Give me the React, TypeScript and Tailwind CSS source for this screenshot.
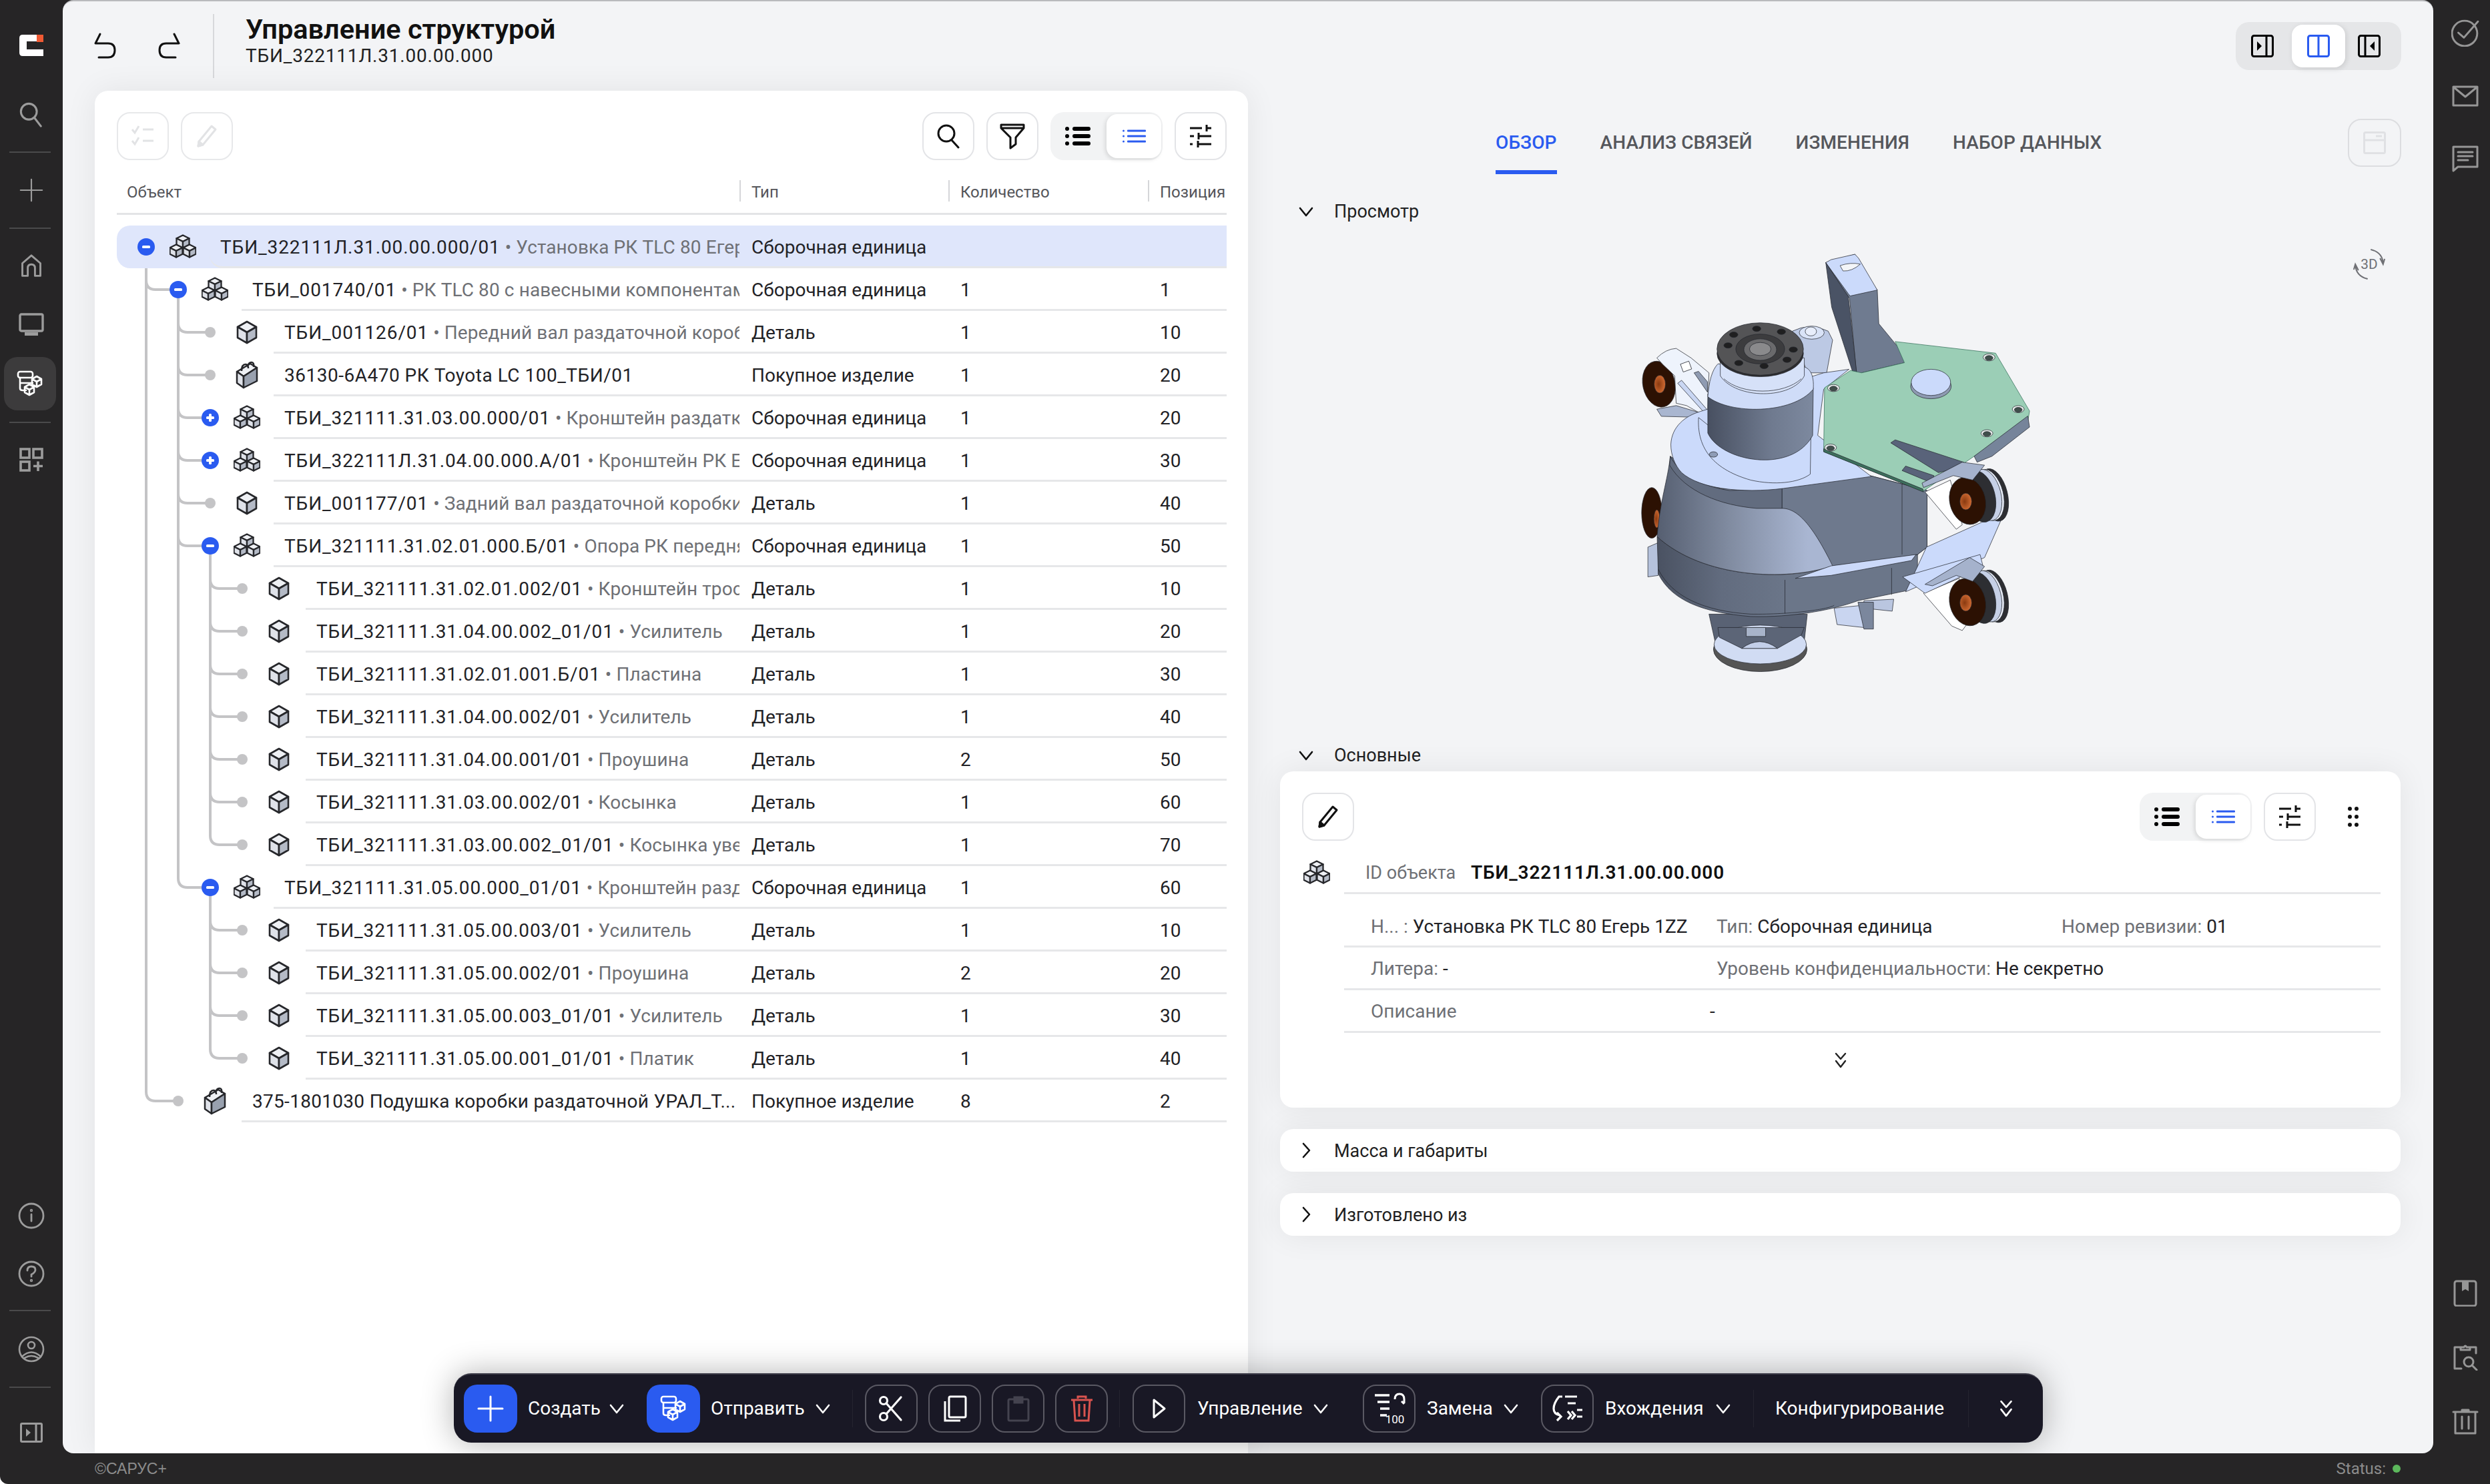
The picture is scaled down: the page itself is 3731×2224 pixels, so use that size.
import React from "react";

const BLUE = "#2a5bf0";

const Svg = ({ s = 40, children, className, fill = "none", c = "currentColor", w = 3, vb = 40 }: any) => (
  <svg width={s} height={s} viewBox={`0 0 ${vb} ${vb}`} fill={fill} stroke={c} strokeWidth={w} strokeLinecap="round" strokeLinejoin="round" className={className}>
    {children}
  </svg>
);

const Cube = () => (
  <svg width="34" height="38" viewBox="0 0 34 38" strokeLinejoin="round">
    <path d="M17 3 L31 11 L17 19 L3 11 Z" fill="#eef0f4" stroke="#26272b" strokeWidth="2.6" />
    <path d="M3 11 L17 19 V35 L3 27 Z" fill="#dfe2e9" stroke="#26272b" strokeWidth="2.6" />
    <path d="M31 11 L17 19 V35 L31 27 Z" fill="#b4bac6" stroke="#26272b" strokeWidth="2.6" />
  </svg>
);

const MiniCube = ({ x, y, r = 11 }: { x: number; y: number; r?: number }) => (
  <g transform={`translate(${x} ${y})`} stroke="#26272b" strokeWidth="2.3" strokeLinejoin="round">
    <path d={`M0 ${-r} L${r} ${-r / 2} L0 0 L${-r} ${-r / 2} Z`} fill="#eef0f4" />
    <path d={`M${-r} ${-r / 2} L0 0 V${r} L${-r} ${r / 2} Z`} fill="#dfe2e9" />
    <path d={`M${r} ${-r / 2} L0 0 V${r} L${r} ${r / 2} Z`} fill="#b4bac6" />
  </g>
);

const Assembly = ({ s = 40 }: { s?: number }) => (
  <svg width={s} height={s} viewBox="0 0 40 40">
    <MiniCube x={20} y={12} r={9.5} />
    <MiniCube x={10} y={26} r={9.5} />
    <MiniCube x={30} y={26} r={9.5} />
  </svg>
);

const Bought = () => (
  <svg width="34" height="42" viewBox="0 0 34 42" strokeLinejoin="round" stroke="#26272b" strokeWidth="2.5">
    <path d="M2 16 L22 4 L32 10 L12 23 Z" fill="#eef0f4" />
    <path d="M2 16 L12 23 V40 L2 33 Z" fill="#dfe2e9" />
    <path d="M32 10 L12 23 V40 L32 30 Z" fill="#99a1af" />
    <path d="M9 15 Q9 5 15 5 Q19 5 19 11 M18 9 Q19 2 24 2 Q28 2 27 9" fill="none" />
  </svg>
);

const Structure = ({ c = "#fff", s = 40 }: { c?: string; s?: number }) => (
  <svg width={s} height={s} viewBox="0 0 40 40" fill="none" stroke={c} strokeWidth="2.6" strokeLinejoin="round" strokeLinecap="round">
    <rect x="2" y="2" width="22" height="9" rx="3" />
    <path d="M5 11 V27 Q5 30 9 30 H14 M5 19 H24" />
    <path d="M30 9 L37 13 V21 L30 25 L23 21 V13 Z M23 13 L30 17 L37 13 M30 17 V25" />
    <path d="M19 21 L26 25 V33 L19 37 L12 33 V25 Z M12 25 L19 29 L26 25 M19 29 V37" />
  </svg>
);

const Chev = ({ s = 24, c = "currentColor", dir = "down", w = 2.6 }: { s?: number; c?: string; dir?: string; w?: number }) => (
  <svg width={s} height={s} viewBox="0 0 24 24" fill="none" stroke={c} strokeWidth={w} strokeLinecap="round" strokeLinejoin="round">
    {dir === "down" ? <path d="M3 7 L12 18 L21 7" /> : <path d="M8 2 L17 12 L8 22" />}
  </svg>
);

const DblChev = ({ c = "currentColor", s = 24, w = 2.4 }: { c?: string; s?: number; w?: number }) => (
  <svg width={s} height={s} viewBox="0 0 24 24" fill="none" stroke={c} strokeWidth={w} strokeLinecap="round" strokeLinejoin="round">
    <path d="M5 2 L12 10 L19 2 M5 13 L12 22 L19 13" />
  </svg>
);

const ListBold = () => (
  <svg width="38" height="30" viewBox="0 0 38 30" fill="#000">
    <circle cx="3" cy="4" r="3" /><circle cx="3" cy="15" r="3" /><circle cx="3" cy="26" r="3" />
    <rect x="11" y="1" width="27" height="6" rx="3" /><rect x="11" y="12" width="27" height="6" rx="3" /><rect x="11" y="23" width="27" height="6" rx="3" />
  </svg>
);
const ListThin = () => (
  <svg width="35" height="20" viewBox="0 0 35 20" fill={BLUE}>
    <circle cx="1.5" cy="2" r="1.5" /><circle cx="1.5" cy="10" r="1.5" /><circle cx="1.5" cy="18" r="1.5" />
    <rect x="7" y="0.5" width="28" height="3" rx="1" /><rect x="7" y="8.5" width="28" height="3" rx="1" /><rect x="7" y="16.5" width="28" height="3" rx="1" />
  </svg>
);
const Tune = () => (
  <svg width="34" height="34" viewBox="0 0 34 34" fill="none" stroke="#111" strokeWidth="3">
    <path d="M1 5 H19 M27 5 H33 M26 0 V10 M1 17 H7 M15 17 H33 M14 12 V22 M1 29 H5 M13 29 H33 M13 24 V34" />
  </svg>
);
const Pencil = ({ c = "#111", w = 3 }: { c?: string; w?: number }) => (
  <svg width="32" height="36" viewBox="0 0 32 36" fill="none" stroke={c} strokeWidth={w} strokeLinejoin="round">
    <path d="M23 3 L29 8 L10 31 L3 33 L4 26 Z" />
    <path d="M4 26 L10 31 L3 33 Z" fill={c} />
  </svg>
);

const IconBtn = ({ children, disabled }: { children: React.ReactNode; disabled?: boolean }) => (
  <div className={`w-[78px] h-[72px] shrink-0 rounded-[20px] border-[2px] flex items-center justify-center ${disabled ? "border-[#e7e8ea]" : "border-[#e3e4e7] bg-white"}`}>
    {children}
  </div>
);

const ListGroup = () => (
  <div className="w-[168px] h-[72px] shrink-0 rounded-[20px] bg-[#f2f3f4] flex items-center p-[3px] pr-[2px]">
    <div className="w-[81px] flex justify-center pr-[5px]"><ListBold /></div>
    <div className="w-[82px] h-[66px] rounded-[16px] bg-white shadow-[-2px_2px_6px_rgba(0,0,0,0.12)] flex items-center justify-center"><ListThin /></div>
  </div>
);

type Row = { l: number; kind: "asm" | "part" | "buy" | "buyw"; exp?: "-" | "+"; name: string; desc?: string; type: string; qty: string; pos: string };
const A = "Сборочная единица", D = "Деталь", P = "Покупное изделие";
const rows: Row[] = [
  { l: 0, kind: "asm", exp: "-", name: "ТБИ_322111Л.31.00.00.000/01", desc: "Установка РК TLC 80 Егер", type: A, qty: "", pos: "" },
  { l: 1, kind: "asm", exp: "-", name: "ТБИ_001740/01", desc: "РК TLC 80 с навесными компонентам", type: A, qty: "1", pos: "1" },
  { l: 2, kind: "part", name: "ТБИ_001126/01", desc: "Передний вал раздаточной короб", type: D, qty: "1", pos: "10" },
  { l: 2, kind: "buy", name: "36130-6A470 РК Toyota LC 100_ТБИ/01", type: P, qty: "1", pos: "20" },
  { l: 2, kind: "asm", exp: "+", name: "ТБИ_321111.31.03.00.000/01", desc: "Кронштейн раздатк", type: A, qty: "1", pos: "20" },
  { l: 2, kind: "asm", exp: "+", name: "ТБИ_322111Л.31.04.00.000.А/01", desc: "Кронштейн РК Е", type: A, qty: "1", pos: "30" },
  { l: 2, kind: "part", name: "ТБИ_001177/01", desc: "Задний вал раздаточной коробки", type: D, qty: "1", pos: "40" },
  { l: 2, kind: "asm", exp: "-", name: "ТБИ_321111.31.02.01.000.Б/01", desc: "Опора РК передня", type: A, qty: "1", pos: "50" },
  { l: 3, kind: "part", name: "ТБИ_321111.31.02.01.002/01", desc: "Кронштейн трос", type: D, qty: "1", pos: "10" },
  { l: 3, kind: "part", name: "ТБИ_321111.31.04.00.002_01/01", desc: "Усилитель", type: D, qty: "1", pos: "20" },
  { l: 3, kind: "part", name: "ТБИ_321111.31.02.01.001.Б/01", desc: "Пластина", type: D, qty: "1", pos: "30" },
  { l: 3, kind: "part", name: "ТБИ_321111.31.04.00.002/01", desc: "Усилитель", type: D, qty: "1", pos: "40" },
  { l: 3, kind: "part", name: "ТБИ_321111.31.04.00.001/01", desc: "Проушина", type: D, qty: "2", pos: "50" },
  { l: 3, kind: "part", name: "ТБИ_321111.31.03.00.002/01", desc: "Косынка", type: D, qty: "1", pos: "60" },
  { l: 3, kind: "part", name: "ТБИ_321111.31.03.00.002_01/01", desc: "Косынка уве", type: D, qty: "1", pos: "70" },
  { l: 2, kind: "asm", exp: "-", name: "ТБИ_321111.31.05.00.000_01/01", desc: "Кронштейн разд", type: A, qty: "1", pos: "60" },
  { l: 3, kind: "part", name: "ТБИ_321111.31.05.00.003/01", desc: "Усилитель", type: D, qty: "1", pos: "10" },
  { l: 3, kind: "part", name: "ТБИ_321111.31.05.00.002/01", desc: "Проушина", type: D, qty: "2", pos: "20" },
  { l: 3, kind: "part", name: "ТБИ_321111.31.05.00.003_01/01", desc: "Усилитель", type: D, qty: "1", pos: "30" },
  { l: 3, kind: "part", name: "ТБИ_321111.31.05.00.001_01/01", desc: "Платик", type: D, qty: "1", pos: "40" },
  { l: 1, kind: "buyw", name: "375-1801030 Подушка коробки раздаточной УРАЛ_Т...", type: P, qty: "8", pos: "2" },
];

const GUT = ["w-[139px] pl-[31px]", "w-[187px] pl-[79px]", "w-[235px] pl-[127px]", "w-[283px] pl-[175px]"];
const NAME = ["w-[794px]", "w-[746px]", "w-[698px]", "w-[650px]"];

const y = (i: number) => 32 + 64 * i;
const br = (xv: number, i: number, xe: number) => `M${xv} ${y(i) - 14} Q${xv} ${y(i)} ${xv + 14} ${y(i)} H${xe}`;
const treePath = [
  `M44 32 V${y(20) - 14}`, br(44, 1, 92), br(44, 20, 93),
  `M92 ${y(1)} V${y(15) - 14}`, ...[2, 3, 4, 5, 6, 7, 15].map((i) => br(92, i, 140)),
  `M140 ${y(7)} V${y(14) - 14}`, ...[8, 9, 10, 11, 12, 13, 14].map((i) => br(140, i, 189)),
  `M140 ${y(15)} V${y(19) - 14}`, ...[16, 17, 18, 19].map((i) => br(140, i, 189)),
].join(" ");

const Expander = ({ t }: { t: "-" | "+" }) => (
  <div className="w-[26px] h-[26px] rounded-full bg-[#2a5bf0] flex items-center justify-center">
    <svg width="14" height="14" viewBox="0 0 14 14" fill="#fff">
      <rect x="1" y="5" width="12" height="4" rx="1.5" />
      {t === "+" && <rect x="5" y="1" width="4" height="12" rx="1.5" />}
    </svg>
  </div>
);

const TreeRow = ({ r, first }: { r: Row; first: boolean }) => (
  <div className={`relative flex h-[64px] text-[28px] text-[#222226] ${first ? "bg-[#dfe6fb] rounded-l-[20px]" : ""}`}>
    <div className={`${GUT[r.l]} shrink-0 flex items-center`}>
      <div className="w-[26px] flex justify-center shrink-0">
        {r.exp ? <Expander t={r.exp} /> : <div className="w-[16px] h-[16px] rounded-full bg-[#c4c4c6]" />}
      </div>
      <div className="ml-[22px] w-[40px] shrink-0 flex justify-center">
        {r.kind === "asm" ? <Assembly /> : r.kind === "part" ? <Cube /> : <Bought />}
      </div>
    </div>
    <div className={`flex-1 flex items-center pt-[4px] border-b-[3px] border-[#e6e7e9] ${first ? "rounded-bl-[20px]" : ""}`}>
      <div className={`${NAME[r.l]} pl-[16px] overflow-hidden whitespace-nowrap`}>
        <span className={r.kind === "buy" ? "tracking-[0.5px]" : r.kind === "buyw" ? "tracking-[0.3px]" : "tracking-[0.9px]"}>{r.name}</span>
        {r.desc && <span className="text-[#6e7075] tracking-[0.1px]"> • {r.desc}</span>}
      </div>
      <div className="w-[313px] pl-[18px] whitespace-nowrap">{r.type}</div>
      <div className="w-[299px] pl-[18px]">{r.qty}</div>
      <div className="w-[118px] pl-[18px]">{r.pos}</div>
    </div>
  </div>
);

const HeadCell = ({ w, children }: { w: string; children: React.ReactNode }) => (
  <div className={`${w} h-[32px] border-l-[2px] border-[#d5d6d9] pl-[16px] flex items-center pt-[3px]`}>{children}</div>
);

const SectionHead = ({ label, open }: { label: string; open?: boolean }) => (
  <div className="flex items-center gap-[30px] h-[44px] ml-[75px] text-[27px] text-[#1f1f22]">
    <Chev s={24} c="#111" dir={open ? "down" : "right"} />
    <span className={open ? "" : "pt-[2px]"}>{label}</span>
  </div>
);

const Mount = ({ cx, cy }: { cx: number; cy: number }) => (
  <g>
    <ellipse cx={cx + 46} cy={cy} rx="46" ry="90" transform={`rotate(-14 ${cx + 46} ${cy})`} fill="#2d2e32" />
    <ellipse cx={cx + 30} cy={cy} rx="48" ry="88" transform={`rotate(-14 ${cx + 30} ${cy})`} fill="#e8edf8" />
    <ellipse cx={cx + 22} cy={cy} rx="48" ry="88" transform={`rotate(-14 ${cx + 22} ${cy})`} fill="#c6d0e6" />
    <ellipse cx={cx} cy={cy + 5} rx="50" ry="88" transform={`rotate(-14 ${cx} ${cy + 5})`} fill="#2d2e32" />
    <ellipse cx={cx - 42} cy={cy + 20} rx="60" ry="80" transform={`rotate(-14 ${cx - 42} ${cy + 20})`} fill="#2c1103" />
    <ellipse cx={cx - 48} cy={cy + 22} rx="20" ry="28" fill="url(#cop)" />
  </g>
);

const Model = () => (
  <svg width="700" height="700" viewBox="0 0 1568 1568" strokeLinejoin="round">
    <defs>
      <linearGradient id="body" gradientUnits="userSpaceOnUse" x1="188" x2="780" y1="0" y2="0">
        <stop offset="0" stopColor="#565f71" />
        <stop offset="0.4" stopColor="#808ba0" />
        <stop offset="0.85" stopColor="#a9b6d2" />
        <stop offset="1" stopColor="#a9b6d2" />
      </linearGradient>
      <linearGradient id="band" gradientUnits="userSpaceOnUse" x1="188" x2="620" y1="0" y2="0">
        <stop offset="0" stopColor="#4a5262" />
        <stop offset="0.5" stopColor="#626c7f" />
        <stop offset="1" stopColor="#6b7689" />
      </linearGradient>
      <linearGradient id="cyl" x1="0" x2="1" y1="0" y2="0">
        <stop offset="0" stopColor="#485061" />
        <stop offset="0.6" stopColor="#6f7a8f" />
        <stop offset="1" stopColor="#7d899f" />
      </linearGradient>
      <radialGradient id="cop" cx="0.4" cy="0.5" r="0.7">
        <stop offset="0" stopColor="#8a3a10" />
        <stop offset="1" stopColor="#e0753a" />
      </radialGradient>
    </defs>
    <g stroke="#22252c" strokeWidth="1.6">
      {/* left rear mounts */}
      <ellipse cx="192" cy="528" rx="54" ry="78" transform="rotate(-12 192 528)" fill="#2c1103" />
      <ellipse cx="195" cy="528" rx="19" ry="30" fill="url(#cop)" />
      <path d="M185 440 Q215 410 250 408 L300 440 L360 490 L355 640 L285 600 L250 592 L245 500 L205 462 Z" fill="#eef3fc" />
      <path d="M185 612 L250 600 L350 630 L350 640 L200 636 Z" fill="#a9b6d0" />
      <path d="M255 525 L268 515 L355 615 L350 630 Z" fill="#c9d6f2" />
      <path d="M310 490 L325 485 L355 520 L355 555 Z" fill="#8f9bb2" />
      <rect x="268" y="455" width="30" height="28" fill="#fff" transform="rotate(-20 283 469)" />
      <ellipse cx="168" cy="960" rx="34" ry="85" fill="#2c1103" />
      <ellipse cx="185" cy="980" rx="10" ry="30" fill="url(#cop)" />
      <path d="M155 1075 L190 1060 V1170 L155 1175 Z" fill="#b5c2dc" />
      {/* rear cylinder */}
      <path d="M640 350 Q700 320 760 350 L775 380 L755 490 L690 490 Z" fill="#bcc9e4" />
      <ellipse cx="705" cy="355" rx="42" ry="22" fill="#d9e3f7" />
      <ellipse cx="702" cy="351" rx="19" ry="15" fill="#e8eefb" />
      {/* bottom flange */}
      <path d="M360 1300 L690 1300 L680 1390 L380 1390 Z" fill="#596274" />
      <ellipse cx="532" cy="1418" rx="157" ry="75" fill="#555" />
      <ellipse cx="532" cy="1402" rx="155" ry="65" fill="#d1dcf3" />
      <path d="M395 1378 L470 1415 L590 1415 L670 1370 L680 1345 L390 1345 Z" fill="#5c6577" />
      <path d="M470 1415 Q530 1370 590 1415 Z" fill="#c3cfe9" />
      <rect x="485" y="1345" width="65" height="30" fill="#a8b4ca" />
      {/* rear pin */}
      <path d="M780 1280 L880 1270 L880 1345 L790 1335 Z" fill="#c9d5f0" />
      <path d="M880 1255 L980 1250 L975 1290 L880 1280 Z" fill="#bac6e0" />
      <path d="M860 1260 H912 V1350 H880 Z" fill="#7b879d" />
      {/* lower band */}
      <path d="M186 1040 L190 1165 C235 1255 340 1295 500 1308 C640 1312 780 1285 860 1255 L1020 1222 L1060 1190 L1060 1100 L770 1140 C620 1190 340 1180 186 1040 Z" fill="url(#band)" />
      <path d="M190 1150 C235 1240 340 1290 500 1300 C640 1302 770 1282 780 1270" fill="none" />
      <path d="M615 1185 V1298 M973 1145 V1235" fill="none" />
      {/* main body */}
      <path d="M230 770 C222 850 195 920 186 1040 C340 1180 620 1190 775 1138 L1060 1100 L1092 1075 V885 L900 835 L400 880 Z" fill="url(#body)" />
      <path d="M605 878 V945 C650 945 700 985 775 1138 L1060 1100 L1092 1075 V885 L900 835 Z" fill="#6e798d" />
      <path d="M230 770 C260 830 330 870 430 885 L605 878 V945 L520 945 C400 935 280 890 228 800 Z" fill="#626c7f" />
      <path d="M1008 855 V1100" fill="none" />
      {/* bright strip */}
      <path d="M650 1180 L770 1138 L1055 1100 L1040 1120 L770 1170 Z" fill="#cbd9f9" />
      {/* top light plate */}
      <path d="M232 730 C235 670 280 635 330 620 L520 560 L745 490 L830 478 L745 545 L725 700 L905 838 L610 878 C470 895 330 880 268 825 C245 800 232 765 232 730 Z" fill="#cbdafb" />
      <path d="M325 640 C320 730 360 810 500 850 C580 868 660 860 700 830 L702 700 L400 700 Z" fill="#cbdafb" />
      <ellipse cx="375" cy="764" rx="14" ry="9" fill="#8f9cb6" />
      {/* main cylinder */}
      <path d="M356 560 V692 C400 790 640 830 708 700 L710 540 Z" fill="url(#cyl)" />
      <path d="M356 570 C360 520 370 480 390 460 L680 470 C710 480 712 520 710 545 C640 630 430 630 356 570 Z" fill="#cfdcf8" />
      <path d="M398 500 C450 580 640 580 680 500 L680 440 H398 Z" fill="#d6e1f8" />
      <path d="M410 510 C470 565 610 565 670 510" fill="none" />
      {/* top flange */}
      <ellipse cx="532" cy="425" rx="145" ry="78" fill="#2d2d2f" />
      <ellipse cx="532" cy="410" rx="145" ry="88" fill="#545456" />
      <ellipse cx="532" cy="410" rx="82" ry="50" fill="#3c3c3e" />
      <ellipse cx="532" cy="412" rx="55" ry="36" fill="#6a6a6c" />
      <ellipse cx="532" cy="410" rx="36" ry="22" fill="#8a8a8c" />
      {[[520, 342], [603, 352], [643, 412], [622, 446], [545, 467], [460, 457], [424, 398], [443, 362]].map(([cx, cy]) => (
        <ellipse key={cx} cx={cx} cy={cy} rx="14" ry="9" fill="#1f1f20" />
      ))}
      {/* tall bracket */}
      <path d="M752 120 L850 92 L868 125 L868 138 L925 212 L930 325 L1018 432 L1016 456 L872 490 L868 550 L860 548 L832 240 Z" fill="#6f7b90" />
      <path d="M752 120 L770 110 L850 92 L862 105 L925 212 L834 232 L828 225 Z" fill="#cbdafb" />
      <path d="M752 120 L828 235 L862 548 L772 270 Z" fill="#4a5365" />
      <path d="M800 130 Q835 118 868 125 Q840 150 810 148 Z" fill="#f3f5f8" />
      {/* right mounts */}
      <path d="M1085 890 L1170 850 L1210 1000 L1190 1015 Z" fill="#fff" />
      <path d="M1080 1230 L1200 1180 L1225 1335 L1210 1355 L1175 1340 Z" fill="#fff" />
      <path d="M1090 1075 L1335 965 L1340 985 L1285 1110 L1020 1225 L1060 1140 Z" fill="#cbdafb" />
      <path d="M1010 1175 L1270 1100 L1280 1140 L1085 1230 Z" fill="#cbdafb" />
      <Mount cx={1270} cy={900} />
      <Mount cx={1270} cy={1240} />
      {/* green plate */}
      <path d="M985 385 L1322 424 L1436 618 L1430 655 L1250 770 L1078 888 L745 755 L748 540 L835 482 L872 490 L1016 456 Z" fill="#9bceb6" stroke="#2f6b55" />
      <path d="M1430 635 L1436 672 L1310 770 L1260 790 L1250 770 Z" fill="#76849a" />
      <path d="M745 745 L1078 880 L1080 890 L745 755 Z" fill="#3d6f5d" />
      <ellipse cx="1105" cy="535" rx="68" ry="42" fill="#8e9ab2" />
      <ellipse cx="1105" cy="522" rx="66" ry="44" fill="#cbdafb" />
      {[[1300, 438], [1398, 612], [1293, 693], [778, 541], [768, 741]].map(([cx, cy]) => (
        <ellipse key={cy} cx={cx} cy={cy} rx="20" ry="12" fill="#e4e9e8" />
      ))}
      {[[1300, 440], [1398, 614], [1293, 695], [778, 543], [768, 743]].map(([cx, cy]) => (
        <ellipse key={cy} cx={cx} cy={cy} rx="13" ry="8" fill="#3f4e4b" />
      ))}
      {/* fins */}
      <path d="M970 725 L985 715 L1215 790 L1210 805 L1130 825 Z" fill="#59637a" />
      <path d="M1008 818 L1020 803 L1115 835 L1110 860 L1080 848 Z" fill="#59637a" />
      <path d="M1075 860 L1210 790 L1285 800 L1245 850 L1180 835 L1080 875 Z" fill="#a5b2cc" />
      <path d="M1085 1200 L1235 1110 L1285 1140 L1245 1190 L1190 1170 L1110 1205 Z" fill="#a5b2cc" />
    </g>
  </svg>
);

const TbBtn = ({ children }: { children: React.ReactNode }) => (
  <div className="w-[79px] h-[72px] shrink-0 rounded-[20px] border-[2px] border-[#5a5963] flex items-center justify-center">{children}</div>
);
const Blue = ({ children, cls }: { children: React.ReactNode; cls?: string }) => (
  <div className={`w-[80px] h-[72px] shrink-0 rounded-[20px] bg-[#2a5bf0] flex items-center justify-center ${cls || ""}`}>{children}</div>
);
const Tsep = ({ cls }: { cls: string }) => <div className={`w-[1px] h-[56px] bg-[#25242f] shrink-0 ${cls}`} />;

const Side = ({ h, children }: { h: string; children?: React.ReactNode }) => (
  <div className={`${h} w-full flex items-center justify-center shrink-0`}>{children}</div>
);
const SideLine = ({ cls }: { cls?: string }) => <div className={`h-[2px] w-[62px] ml-[14px] bg-[#4a4a4b] shrink-0 ${cls || ""}`} />;

export default function App() {
  return (
    <div className="w-[3731px] h-[2224px] flex bg-[#262526] rounded-bl-[12px] overflow-hidden font-['Roboto','Noto_Sans',sans-serif] relative">
      {/* left rail */}
      <div className="w-[94px] shrink-0 flex flex-col text-[#9c9c9c]">
        <Side h="h-[136px]">
          <svg width="36" height="32" viewBox="0 0 36 32">
            <path d="M0 5 Q0 0 5 0 H27 V10 H11 V22 H36 V32 H5 Q0 32 0 27 Z" fill="#fff" />
            <rect x="26" y="0" width="10" height="11" fill="#f05a33" />
          </svg>
        </Side>
        <div className="h-[17px] shrink-0" />
        <div className="h-[37px] flex justify-center shrink-0">
          <Svg s={38} w={3.2}><circle cx="16" cy="15" r="12.5" /><path d="M25 25 L35 38" /></Svg>
        </div>
        <div className="h-[39px] flex items-end shrink-0"><SideLine /></div>
        <Side h="h-[112px]"><Svg s={36} w={2.4}><path d="M20 2 V38 M2 20 H38" /></Svg></Side>
        <SideLine />
        <Side h="h-[112px]">
          <Svg s={36} w={3.2}><path d="M5 36 V15 L20 2 L35 15 V36 H26 V23 Q26 17 20 17 Q14 17 14 23 V36 Z" /></Svg>
        </Side>
        <Side h="h-[64px]">
          <svg width="38" height="36" viewBox="0 0 38 36" fill="none" stroke="currentColor" strokeWidth="3.4">
            <rect x="2" y="2" width="34" height="25" rx="2" />
            <rect x="9" y="29" width="20" height="5" fill="currentColor" stroke="none" />
          </svg>
        </Side>
        <div className="h-[16px] shrink-0" />
        <div className="h-[80px] w-[78px] ml-[6px] rounded-[20px] bg-[#3c3b3c] flex items-center justify-center shrink-0"><Structure /></div>
        <div className="h-[17px] shrink-0" />
        <SideLine />
        <Side h="h-[110px]">
          <svg width="36" height="36" viewBox="0 0 36 36" fill="none" stroke="currentColor" strokeWidth="3.6">
            <rect x="2" y="2" width="13" height="13" /><rect x="21" y="2" width="13" height="13" /><rect x="2" y="21" width="13" height="13" /><path d="M21 27.5 H35 M28 20.5 V35" />
          </svg>
        </Side>
        <div className="flex-1" />
        <div className="flex flex-col items-center h-[127px] shrink-0">
          <Svg s={40} w={2.8}><circle cx="20" cy="20" r="18" /><path d="M20 18 V28" /><circle cx="20" cy="12" r="0.8" /></Svg>
          <div className="h-[47px] shrink-0" />
          <Svg s={40} w={2.8}><circle cx="20" cy="20" r="18" /><path d="M14 15 Q14 9 20 9 Q26 9 26 14 Q26 18 20 21 V24" /><circle cx="20" cy="30" r="0.8" /></Svg>
        </div>
        <div className="h-[34px] shrink-0" />
        <SideLine />
        <Side h="h-[113px]">
          <Svg s={40} w={2.6}><circle cx="20" cy="20" r="18" /><circle cx="20" cy="14" r="5" /><path d="M6 31 Q20 18 34 31 M10 33 Q20 27 30 33" /></Svg>
        </Side>
        <SideLine />
        <Side h="h-[134px]">
          <svg width="34" height="30" viewBox="0 0 34 30" fill="none" stroke="currentColor" strokeWidth="3">
            <rect x="1.5" y="1.5" width="31" height="27" rx="1.5" />
            <path d="M24 2 V28" />
            <path d="M9 9 L16 15 L9 21 Z" fill="currentColor" stroke="none" />
          </svg>
        </Side>
        <div className="h-[10px] shrink-0" />
      </div>

      {/* center */}
      <div className="w-[3552px] shrink-0 flex flex-col relative">
        <main className="h-[2178px] rounded-[16px] bg-[#f3f4f6] border-t-[2px] border-[#b9babd] flex flex-col relative overflow-hidden">
          {/* header */}
          <header className="h-[134px] shrink-0 flex items-center pl-[40px]">
            <svg width="48" height="48" viewBox="0 0 48 48" fill="none" stroke="#111" strokeWidth="3" strokeLinecap="round" strokeLinejoin="round">
              <path d="M16 6 L9 20 L24 20 M10 20 H28 Q38 20 38 30 Q38 41 28 41 H14" />
            </svg>
            <svg width="48" height="48" viewBox="0 0 48 48" fill="none" stroke="#111" strokeWidth="3" strokeLinecap="round" strokeLinejoin="round" className="ml-[47px]">
              <path d="M32 6 L39 20 L24 20 M38 20 H20 Q10 20 10 30 Q10 41 20 41 H34" />
            </svg>
            <div className="w-[2px] h-[96px] bg-[#d7d8db] ml-[42px]" />
            <div className="ml-[47px] mb-[15px] flex flex-col">
              <div className="text-[41.5px] leading-[44px] font-semibold text-[#111] whitespace-nowrap">Управление структурой</div>
              <div className="text-[28px] leading-[36px] text-[#222] tracking-[0.8px] whitespace-nowrap">ТБИ_322111Л.31.00.00.000</div>
            </div>
            <div className="ml-auto mr-[48px] w-[248px] h-[72px] rounded-[20px] bg-[#e5e6e8] flex items-center pl-[23px]">
              <svg width="34" height="34" viewBox="0 0 34 34" fill="none" stroke="#000" strokeWidth="3"><rect x="1.5" y="1.5" width="31" height="31" rx="3" /><path d="M23 2 V32" /><path d="M9 10 L16 17 L9 24 Z" fill="#000" stroke="none" /></svg>
              <div className="ml-[27px] w-[80px] h-[64px] rounded-[16px] bg-white shadow-[2px_2px_8px_rgba(0,0,0,0.12)] flex items-center justify-center">
                <svg width="34" height="34" viewBox="0 0 34 34" fill="none" stroke={BLUE} strokeWidth="3"><rect x="1.5" y="1.5" width="31" height="31" rx="3" /><path d="M17 2 V32" /></svg>
              </div>
              <svg width="34" height="34" viewBox="0 0 34 34" fill="none" stroke="#000" strokeWidth="3" className="ml-[19px]"><rect x="1.5" y="1.5" width="31" height="31" rx="3" /><path d="M11 2 V32" /><path d="M25 10 L18 17 L25 24 Z" fill="#000" stroke="none" /></svg>
            </div>
          </header>

          {/* body */}
          <div className="flex-1 flex min-h-0">
            {/* tree panel */}
            <div className="w-[1776px] shrink-0 pl-[48px] h-full">
              <div className="h-full rounded-t-[20px] bg-white shadow-[0_0_48px_rgba(0,0,0,0.07)] pl-[33px] pr-[32px] pt-[32px] flex flex-col">
                <div className="flex items-center h-[72px] shrink-0">
                  <IconBtn disabled>
                    <svg width="36" height="34" viewBox="0 0 36 34" fill="none" stroke="#e2e3e5" strokeWidth="3"><path d="M2 7 L6 12 L12 2 M2 24 L6 29 L12 19 M18 7 H34 M18 24 H34" /></svg>
                  </IconBtn>
                  <div className="w-[18px]" />
                  <IconBtn disabled><Pencil c="#e2e3e5" /></IconBtn>
                  <div className="ml-auto flex items-center gap-[18px]">
                    <IconBtn>
                      <svg width="38" height="38" viewBox="0 0 38 38" fill="none" stroke="#111" strokeWidth="3" strokeLinecap="round"><circle cx="16" cy="15" r="12" /><path d="M24 25 L34 36" /></svg>
                    </IconBtn>
                    <IconBtn>
                      <svg width="38" height="40" viewBox="0 0 38 40" fill="none" stroke="#111" strokeWidth="3" strokeLinejoin="round"><path d="M2 3 H36 V8 L24 22 V32 L16 38 V22 L2 8 Z M2 8 H36" /></svg>
                    </IconBtn>
                    <ListGroup />
                    <IconBtn><Tune /></IconBtn>
                  </div>
                </div>
                <div className="h-[82px] shrink-0 flex items-end pb-[17px] border-b-[3px] border-[#e3e4e6] text-[24px] text-[#55565b]">
                  <div className="w-[933px] h-[32px] pl-[15px] flex items-center pt-[3px]">Объект</div>
                  <HeadCell w="w-[313px]">Тип</HeadCell>
                  <HeadCell w="w-[299px]">Количество</HeadCell>
                  <HeadCell w="w-[118px]">Позиция</HeadCell>
                </div>
                <div className="relative mt-[16px] shrink-0">
                  <svg className="absolute left-0 top-0" width="300" height="1344" fill="none" stroke="#c4c4c6" strokeWidth="4">
                    <path d={treePath} />
                  </svg>
                  {rows.map((r, i) => (
                    <TreeRow key={i} r={r} first={i === 0} />
                  ))}
                </div>
              </div>
            </div>

            {/* right panel */}
            <div className="flex-1 min-w-0 flex flex-col">
              <div className="flex items-start pl-[371px] pr-[48px] h-[125px] shrink-0">
                <div className="flex gap-[65px] pt-[60px] text-[28px] font-medium tracking-[0.1px] text-[#55575c] whitespace-nowrap">
                  <div className="text-[#2a5bf0] h-[65px] leading-[36px] border-b-[6px] border-[#2a5bf0]">ОБЗОР</div>
                  <div className="leading-[36px]">АНАЛИЗ СВЯЗЕЙ</div>
                  <div className="leading-[36px]">ИЗМЕНЕНИЯ</div>
                  <div className="leading-[36px]">НАБОР ДАННЫХ</div>
                </div>
                <div className="ml-auto mt-[42px] w-[80px] h-[72px] rounded-[20px] border-[2px] border-[#dcdde0] flex items-center justify-center">
                  <svg width="34" height="34" viewBox="0 0 34 34" fill="none" stroke="#e0e1e4" strokeWidth="3"><rect x="1.5" y="1.5" width="31" height="31" rx="2" /><path d="M2 13 H32" /><path d="M19 7 H28" /></svg>
                </div>
              </div>
              <div className="mt-[34px] shrink-0"><SectionHead label="Просмотр" open /></div>
              <div className="relative h-[771px] shrink-0 pl-[530px] pt-[1px]">
                <Model />
                <div className="absolute left-[1654px] top-[31px]">
                  <svg width="52" height="52" viewBox="0 0 50 50" fill="none" stroke="#6f7075" strokeWidth="2" strokeLinecap="round">
                    <path d="M28 4 Q44 8 45 24 M41 17 L45 25 L47 18 M22 46 Q6 42 5 26 M9 33 L5 25 L3 32" />
                    <text x="25" y="32" textAnchor="middle" fontSize="20" fill="#6f7075" stroke="none" fontFamily="Roboto">3D</text>
                  </svg>
                </div>
              </div>
              <SectionHead label="Основные" open />
              <div className="ml-[48px] mr-[49px] mt-[2px] h-[504px] shrink-0 rounded-[20px] bg-white shadow-[0_0_48px_rgba(0,0,0,0.07)] pt-[32px] text-[28px] text-[#222226]">
                <div className="flex items-center h-[72px] pl-[33px] pr-[59px]">
                  <IconBtn><Pencil /></IconBtn>
                  <div className="ml-auto"><ListGroup /></div>
                  <div className="ml-[18px]"><IconBtn><Tune /></IconBtn></div>
                  <div className="ml-[44px] w-[24px] flex justify-center">
                    <svg width="16" height="32" viewBox="0 0 16 32" fill="#111"><circle cx="3" cy="4" r="3" /><circle cx="13" cy="4" r="3" /><circle cx="3" cy="16" r="3" /><circle cx="13" cy="16" r="3" /><circle cx="3" cy="28" r="3" /><circle cx="13" cy="28" r="3" /></svg>
                  </div>
                </div>
                <div className="flex ml-[37px] mr-[30px]">
                  <div className="w-[59px] h-[80px] flex items-end pb-[12px] -ml-[2px]"><Assembly /></div>
                  <div className="flex-1 h-[80px] border-b-[3px] border-[#e6e7e9] flex items-end pb-[11px] pl-[32px] ml-[2px] leading-[36px] whitespace-nowrap">
                    <span className="text-[#6e7075] w-[158px] text-[27px]">ID объекта</span>
                    <span className="font-semibold text-[#111] tracking-[0.9px]">ТБИ_322111Л.31.00.00.000</span>
                  </div>
                </div>
                <div className="ml-[96px] mr-[30px]">
                  <div className="h-[80px] border-b-[3px] border-[#e6e7e9] grid grid-cols-[518px_517px_1fr] items-end pb-[10px] pl-[40px] leading-[36px] whitespace-nowrap">
                    <div><span className="text-[#6e7075]">Н... : </span>Установка РК TLC 80 Егерь 1ZZ</div>
                    <div><span className="text-[#6e7075]">Тип: </span>Сборочная единица</div>
                    <div><span className="text-[#6e7075]">Номер ревизии: </span>01</div>
                  </div>
                  <div className="h-[64px] border-b-[3px] border-[#e6e7e9] grid grid-cols-[518px_1fr] items-center pt-[3px] pl-[40px] whitespace-nowrap">
                    <div><span className="text-[#6e7075]">Литера: </span>-</div>
                    <div><span className="text-[#6e7075]">Уровень конфиденциальности: </span>Не секретно</div>
                  </div>
                  <div className="h-[64px] border-b-[3px] border-[#e6e7e9] grid grid-cols-[508px_1fr] items-center pt-[3px] pl-[40px]">
                    <div className="text-[#6e7075]">Описание</div>
                    <div>-</div>
                  </div>
                </div>
                <div className="flex justify-center mt-[29px]"><DblChev c="#222" /></div>
              </div>
              <div className="ml-[48px] mr-[49px] mt-[32px] h-[64px] shrink-0 rounded-[20px] bg-white shadow-[0_0_48px_rgba(0,0,0,0.07)] flex items-center">
                <div className="-ml-[48px] w-full"><SectionHead label="Масса и габариты" /></div>
              </div>
              <div className="ml-[48px] mr-[49px] mt-[32px] h-[64px] shrink-0 rounded-[20px] bg-white shadow-[0_0_48px_rgba(0,0,0,0.07)] flex items-center">
                <div className="-ml-[48px] w-full"><SectionHead label="Изготовлено из" /></div>
              </div>
            </div>
          </div>

          {/* floating toolbar */}
          <div className="absolute left-[586px] bottom-[16px] w-[2381px] h-[104px] rounded-[26px] bg-[#191825] border-t-[2px] border-[#3c3b48] shadow-[0_0_48px_rgba(0,0,0,0.3)] flex items-center pl-[15px] text-[28px] text-white whitespace-nowrap">
            <Blue>
              <svg width="40" height="40" viewBox="0 0 40 40" stroke="#fff" strokeWidth="3" strokeLinecap="round"><path d="M20 2 V38 M2 20 H38" /></svg>
            </Blue>
            <span className="ml-[16px] w-[121px]">Создать</span>
            <Chev s={24} c="#fff" />
            <Blue cls="ml-[33px]"><Structure /></Blue>
            <span className="ml-[16px] w-[156px]">Отправить</span>
            <Chev s={24} c="#fff" />
            <Tsep cls="ml-[32px]" />
            <div className="ml-[18px]">
              <TbBtn>
                <svg width="40" height="40" viewBox="0 0 40 40" fill="none" stroke="#fff" strokeWidth="3.2" strokeLinecap="round"><circle cx="8" cy="8" r="5.5" /><circle cx="8" cy="32" r="5.5" /><path d="M12 12 L34 37 M12 28 L34 3" /></svg>
              </TbBtn>
            </div>
            <div className="ml-[16px]">
              <TbBtn>
                <svg width="36" height="40" viewBox="0 0 36 40" fill="none" stroke="#fff" strokeWidth="3"><rect x="9" y="2" width="25" height="31" rx="2" /><path d="M3 9 V38 H26" /></svg>
              </TbBtn>
            </div>
            <div className="ml-[16px]">
              <TbBtn>
                <svg width="36" height="40" viewBox="0 0 36 40" fill="none" stroke="#44434f" strokeWidth="3"><rect x="3" y="6" width="30" height="32" rx="2" /><rect x="12" y="3" width="12" height="8" fill="#44434f" /></svg>
              </TbBtn>
            </div>
            <div className="ml-[16px]">
              <TbBtn>
                <svg width="36" height="40" viewBox="0 0 36 40" fill="none" stroke="#d9534f" strokeWidth="3"><path d="M2 7 H34 M12 5 V2 H24 V5 M6 8 L8 38 H28 L30 8 M14 13 V32 M22 13 V32" /></svg>
              </TbBtn>
            </div>
            <Tsep cls="ml-[17px]" />
            <div className="ml-[19px]">
              <TbBtn>
                <svg width="24" height="32" viewBox="0 0 24 32" fill="none" stroke="#fff" strokeWidth="3" strokeLinejoin="round"><path d="M4 3 L20 16 L4 29 Z" /></svg>
              </TbBtn>
            </div>
            <span className="ml-[18px] w-[173px]">Управление</span>
            <Chev s={24} c="#fff" />
            <div className="ml-[51px]">
              <TbBtn>
                <svg width="48" height="52" viewBox="0 0 48 52" fill="none" stroke="#fff" strokeWidth="3">
                  <path d="M2 6 H24 M6 16 H24 M10 26 H24 M10 36 H20" strokeWidth="3.4" />
                  <path d="M32 12 Q32 4 39 4 Q46 4 46 12 V18 M42 15 L46 19" />
                  <text x="32" y="48" fontSize="17" fill="#fff" stroke="none" textAnchor="middle" fontFamily="Roboto">100</text>
                </svg>
              </TbBtn>
            </div>
            <span className="ml-[17px] w-[114px]">Замена</span>
            <Chev s={24} c="#fff" />
            <div className="ml-[33px]">
              <TbBtn>
                <svg width="48" height="44" viewBox="0 0 48 44" fill="none" stroke="#fff" strokeWidth="3.2">
                  <path d="M16 4 H11 Q3 14 3 22 Q3 30 12 32 M8 28 L14 34 L8 40" />
                  <path d="M20 4 H38 M24 14 H36 M24 26 L29 32 L24 38 M30 26 L35 32 L30 38 M38 24 H46 M38 34 H46" />
                </svg>
              </TbBtn>
            </div>
            <span className="ml-[17px] w-[165px]">Вхождения</span>
            <Chev s={24} c="#fff" />
            <Tsep cls="ml-[33px]" />
            <span className="ml-[32px] w-[257px]">Конфигурирование</span>
            <Tsep cls="ml-[32px]" />
            <div className="ml-[43px]"><DblChev c="#fff" s={26} /></div>
          </div>
        </main>
        <footer className="flex-1 flex items-center justify-between pl-[48px] pr-[49px] text-[24px] text-[#8c8c8c]">
          <span className="font-['Liberation_Sans'] text-[23px]">©САРУС+</span>
          <div className="flex items-center gap-[10px]">
            <span>Status:</span>
            <span className="w-[12px] h-[12px] rounded-full bg-[#5cb85c]" />
          </div>
        </footer>
      </div>

      {/* right rail */}
      <div className="w-[85px] shrink-0 flex flex-col items-center text-[#969696] pt-[28px] pl-[11px]">
        <Svg s={42} w={2.8}><circle cx="19" cy="21" r="18" /><path d="M10 20 L18 27 L38 4" /></Svg>
        <div className="h-[54px]" />
        <Svg s={40} w={3}><path d="M2 6 H38 V34 H2 Z M3 7 L20 21 L37 7" /></Svg>
        <div className="h-[54px]" />
        <Svg s={40} w={3}>
          <path d="M2 2 H38 V32 H9 L2 38 Z M9 10 H31 M9 16 H31 M9 22 H24" />
        </Svg>
        <div className="flex-1" />
        <Svg s={40} w={3}><rect x="4" y="2" width="32" height="37" rx="3" /><path d="M15 2 V17 L20 14 L25 17 V2 Z" fill="currentColor" stroke="none" /></Svg>
        <div className="h-[56px]" />
        <Svg s={40} w={3}>
          <path d="M14 5 H4 V37 H14 M26 5 H36 V14 M13 9 V5 H18 Q20 1 22 5 H27 V9 Z" />
          <circle cx="25" cy="27" r="7" /><path d="M30 32 L37 39" />
        </Svg>
        <div className="h-[56px]" />
        <Svg s={40} w={3}><path d="M2 6 H38 M15 5 V3 H25 V5 M5 7 V38 H35 V7 M15 13 V31 M25 13 V31" /></Svg>
        <div className="h-[74px]" />
      </div>
    </div>
  );
}
